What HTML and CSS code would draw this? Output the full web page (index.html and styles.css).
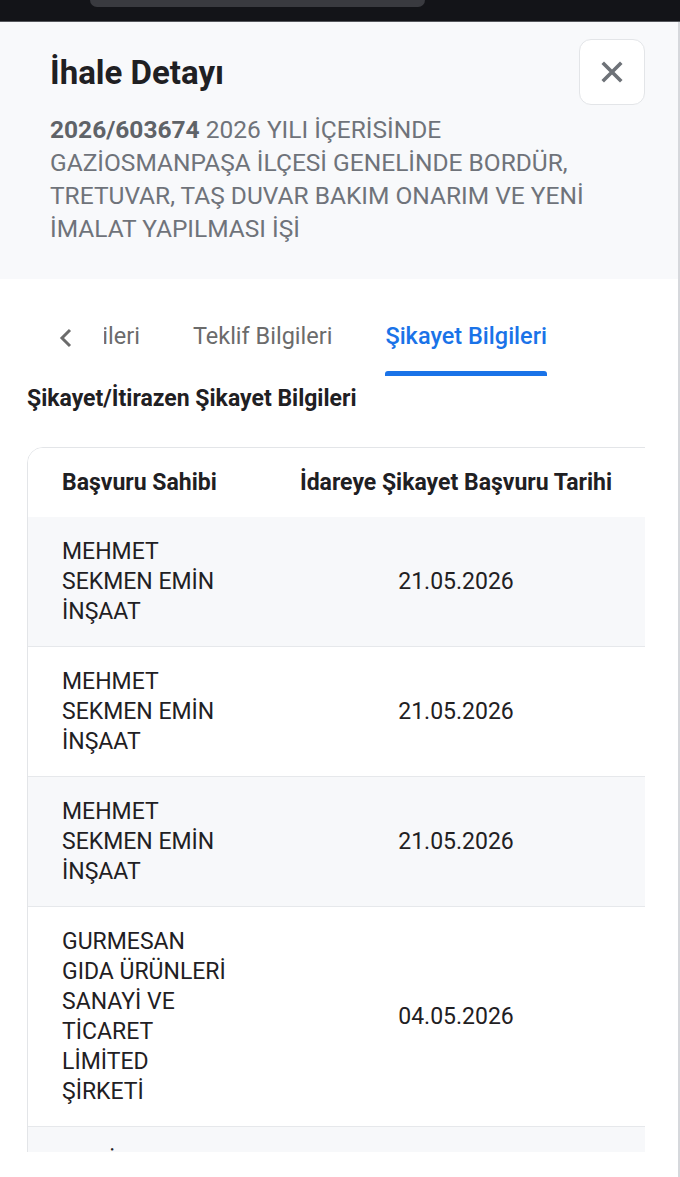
FILE: index.html
```html
<!DOCTYPE html>
<html lang="tr">
<head>
    <meta charset="UTF-8">
    <meta name="viewport" content="width=device-width, initial-scale=1.0">
    <title>İhale Detayı</title>
    <link rel="stylesheet" href="styles.css">
</head>
<body>
    <div class="status-bar">
        <div class="notch"></div>
    </div>

    <div class="modal">
        <header class="modal-head">
            <div class="head-row">
                <h1>İhale Detayı</h1>
                <button class="close-btn" aria-label="Kapat">
                    <svg width="22" height="22" viewBox="0 0 22 22">
                        <path d="M3 3 L19 19 M19 3 L3 19" stroke="#6e7278" stroke-width="3.6" stroke-linecap="square" fill="none"/>
                    </svg>
                </button>
            </div>
            <p class="subtitle"><strong>2026/603674</strong> 2026 YILI İÇERİSİNDE GAZİOSMANPAŞA İLÇESİ GENELİNDE BORDÜR, TRETUVAR, TAŞ DUVAR BAKIM ONARIM VE YENİ İMALAT YAPILMASI İŞİ</p>
        </header>

        <div class="modal-body">
            <nav class="tabs">
                <button class="tab-prev" aria-label="Önceki">
                    <svg width="14" height="20" viewBox="0 0 14 20">
                        <path d="M11 2 L3 10 L11 18" stroke="#6b6b6b" stroke-width="3" fill="none"/>
                    </svg>
                </button>
                <div class="tab-viewport">
                    <div class="tab-strip">
                        <span class="tab">Genel Bilgileri</span>
                        <span class="tab">İhale Bilgileri</span>
                        <span class="tab">Teklif Bilgileri</span>
                        <span class="tab active">Şikayet Bilgileri</span>
                    </div>
                </div>
            </nav>

            <h2 class="section-title">Şikayet/İtirazen Şikayet Bilgileri</h2>

            <div class="table-scroll">
                <div class="table-card">
                    <table>
                        <thead>
                            <tr>
                                <th class="col-name">Başvuru Sahibi</th>
                                <th class="col-date">İdareye Şikayet Başvuru Tarihi</th>
                                <th class="col-extra">Karar</th>
                            </tr>
                        </thead>
                        <tbody>
                            <tr>
                                <td class="col-name">MEHMET SEKMEN EMİN İNŞAAT</td>
                                <td class="col-date">21.05.2026</td>
                                <td class="col-extra"></td>
                            </tr>
                            <tr>
                                <td class="col-name">MEHMET SEKMEN EMİN İNŞAAT</td>
                                <td class="col-date">21.05.2026</td>
                                <td class="col-extra"></td>
                            </tr>
                            <tr>
                                <td class="col-name">MEHMET SEKMEN EMİN İNŞAAT</td>
                                <td class="col-date">21.05.2026</td>
                                <td class="col-extra"></td>
                            </tr>
                            <tr>
                                <td class="col-name">GURMESAN GIDA ÜRÜNLERİ SANAYİ VE TİCARET LİMİTED ŞİRKETİ</td>
                                <td class="col-date">04.05.2026</td>
                                <td class="col-extra"></td>
                            </tr>
                            <tr>
                                <td class="col-name">METİN YAPI İNŞAAT</td>
                                <td class="col-date">02.05.2026</td>
                                <td class="col-extra"></td>
                            </tr>
                        </tbody>
                    </table>
                </div>
            </div>
        </div>
    </div>
</body>
</html>
```

FILE: styles.css
```css
* {
    box-sizing: border-box;
}

html, body {
    margin: 0;
    padding: 0;
    background: #ffffff;
}

body {
    font-family: Roboto, "Noto Sans", Arial, sans-serif;
    width: 680px;
    height: 1177px;
    overflow: hidden;
    color: #1f2023;
}

.status-bar {
    height: 22px;
    background: #131418;
    border-bottom: 1px solid #55575c;
    display: flex;
    padding-left: 90px;
}

.notch {
    width: 335px;
    height: 7px;
    background: #393a3f;
    border-radius: 0 0 12px 12px;
}

.modal {
    height: 1155px;
    border-right: 2px solid #d6d8dc;
    background: #ffffff;
}

.modal-head {
    background: #f8f9fb;
    padding: 17px 33px 34px 50px;
}

.head-row {
    display: flex;
    align-items: center;
    justify-content: space-between;
}

h1 {
    margin: 0;
    font-size: 33px;
    line-height: 40px;
    font-weight: 700;
    color: #1f2023;
    padding-top: 2px;
}

.close-btn {
    width: 66px;
    height: 66px;
    border: 1px solid #e3e5e8;
    border-radius: 12px;
    background: #ffffff;
    display: flex;
    align-items: center;
    justify-content: center;
    padding: 0;
}

.subtitle {
    margin: 8px 0 0;
    max-width: 560px;
    font-size: 24.5px;
    line-height: 33px;
    color: #6f737a;
}

.subtitle strong {
    color: #5f6368;
    font-weight: 700;
}

.modal-body {
    height: 873px;
    overflow: hidden;
    padding: 21px 35px 0 27px;
}

.tabs {
    display: flex;
    align-items: stretch;
}

.tab-prev {
    width: 77px;
    border: none;
    background: #ffffff;
    display: flex;
    align-items: center;
    padding: 0 0 0 32px;
}

.tab-viewport {
    width: 443px;
    overflow: hidden;
    display: flex;
    justify-content: flex-end;
}

.tab-strip {
    display: flex;
    gap: 53px;
    flex-shrink: 0;
}

.tab {
    position: relative;
    padding: 24px 0 28px;
    font-size: 23.5px;
    line-height: 24px;
    color: #6b6b6b;
    white-space: nowrap;
}

.tab.active {
    color: #1a73e8;
    font-weight: 500;
}

.tab.active::after {
    content: "";
    position: absolute;
    left: 0;
    right: 0;
    bottom: 0;
    height: 5px;
    background: #1a73e8;
    border-radius: 3px 3px 0 0;
}

.section-title {
    margin: 9px 0 0;
    font-size: 23px;
    line-height: 28px;
    font-weight: 700;
    color: #1f2023;
}

.table-scroll {
    margin-top: 34px;
    width: 618px;
    overflow: hidden;
}

.table-card {
    width: 780px;
    border: 1px solid #e3e5e8;
    border-radius: 16px 16px 0 0;
    overflow: hidden;
}

table {
    width: 100%;
    border-collapse: collapse;
}

th {
    font-size: 23px;
    line-height: 24px;
    font-weight: 700;
    color: #1f2023;
    padding: 23px 34px 22px;
    text-align: left;
    white-space: nowrap;
    background: #ffffff;
}

td {
    font-size: 23px;
    line-height: 30px;
    color: #1f2023;
    padding: 20px 34px 19px;
    vertical-align: middle;
}

tbody tr {
    border-top: 1px solid #e6e8eb;
}

tbody tr:first-child {
    border-top: none;
}

tbody tr:nth-child(odd) {
    background: #f7f8fa;
}

.col-name {
    width: 237px;
}

th.col-date,
td.col-date {
    width: 382px;
    text-align: center;
}
```
